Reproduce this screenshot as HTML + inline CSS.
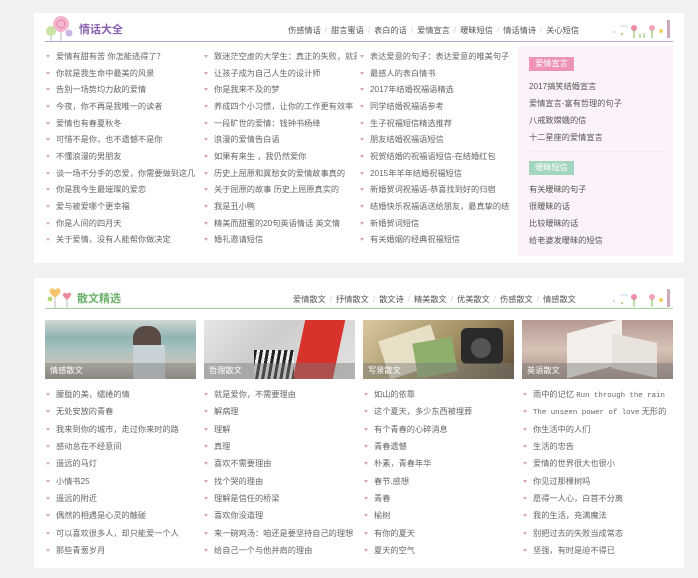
<!DOCTYPE html>
<html><head><meta charset="utf-8"><style>
*{margin:0;padding:0;box-sizing:border-box}
body{width:698px;height:578px;background:#f1f1f1;font-family:"Liberation Sans","Noto Sans CJK SC",sans-serif;font-size:9px;color:#555;position:relative;overflow:hidden}
.panel{position:absolute;left:34px;width:650px;background:#fff}
.a{position:absolute;white-space:nowrap}
.li{position:absolute;white-space:nowrap;font-size:8.2px;color:#666;line-height:12px;width:143px;overflow:visible}
.li b{display:block;overflow:hidden;font-weight:normal;width:143px}
.li:before{content:"";position:absolute;left:-10px;top:4px;border-left:2.5px solid transparent;border-right:2.5px solid transparent;border-top:3.5px solid #d9a5b5}
.nav{position:absolute;font-size:8.2px;color:#555;white-space:nowrap}
.nav span{color:#ccc;margin:0 4px}
.side{position:absolute;font-size:8.2px;color:#555;white-space:nowrap}
.img{position:absolute;top:320px;width:151px;height:59px;overflow:hidden}
.cap{position:absolute;left:0;bottom:0;width:100%;height:16px;background:rgba(120,120,120,.45);color:#fff;font-size:8.2px;line-height:16px;padding-left:5px}
</style></head><body>
<div class="panel" style="top:13px;height:250px"></div>
<div class="panel" style="top:278px;height:290px"></div>

<svg class="a" style="left:44px;top:14px" width="30" height="28"><circle cx="17" cy="10" r="8" fill="#f3b5cf"/><circle cx="17" cy="10" r="4" fill="none" stroke="#e07fa8" stroke-width="1"/><circle cx="7" cy="17" r="5" fill="#c9e3a5"/><circle cx="25" cy="19" r="3.5" fill="#cbb4e3"/><line x1="17" y1="18" x2="17" y2="28" stroke="#bbb"/><line x1="7" y1="22" x2="7" y2="28" stroke="#bbb"/></svg>
<div class="a" style="left:79px;top:21px;font-size:11px;font-weight:bold;color:#8a5fb0">情话大全</div>
<div class="nav" style="left:288px;top:24px">伤感情话<span>/</span>甜言蜜语<span>/</span>表白的话<span>/</span>爱情宣言<span>/</span>暧昧短信<span>/</span>情话情诗<span>/</span>关心短信</div>
<svg class="a" style="left:592px;top:16px" width="80" height="24"><circle cx="22" cy="16" r="1" fill="#bcd"/><circle cx="30" cy="18" r="1" fill="#9c6"/><line x1="28" y1="10" x2="36" y2="10" stroke="#bde" /><circle cx="42" cy="12" r="3" fill="#f08aa8"/><circle cx="60" cy="12" r="3" fill="#f5a3b8"/><circle cx="69" cy="15" r="2" fill="#f5d060"/><line x1="42" y1="14" x2="42" y2="22" stroke="#7b5"/><line x1="60" y1="14" x2="60" y2="22" stroke="#7b5"/><line x1="48" y1="18" x2="48" y2="22" stroke="#7b5"/><line x1="52" y1="17" x2="52" y2="22" stroke="#7b5"/><rect x="75" y="4" width="3" height="18" fill="#cab"/></svg>
<div class="a" style="left:45px;top:41px;width:628px;height:1px;background:#b9a6cf"></div>

<div class="li" style="left:56px;top:51px"><b>爱情有甜有苦 你怎能逃得了？</b></div>
<div class="li" style="left:56px;top:68px"><b>你就是我生命中最美的风景</b></div>
<div class="li" style="left:56px;top:84px"><b>告别一场势均力敌的爱情</b></div>
<div class="li" style="left:56px;top:101px"><b>今夜，你不再是我唯一的读者</b></div>
<div class="li" style="left:56px;top:118px"><b>爱情也有春夏秋冬</b></div>
<div class="li" style="left:56px;top:134px"><b>可惜不是你，也不遗憾不是你</b></div>
<div class="li" style="left:56px;top:151px"><b>不懂浪漫的男朋友</b></div>
<div class="li" style="left:56px;top:168px"><b>谈一场不分手的恋爱，你需要做到这几</b></div>
<div class="li" style="left:56px;top:184px"><b>你是我今生最璀璨的爱恋</b></div>
<div class="li" style="left:56px;top:201px"><b>爱与被爱哪个更幸福</b></div>
<div class="li" style="left:56px;top:218px"><b>你是人间的四月天</b></div>
<div class="li" style="left:56px;top:234px"><b>关于爱情，没有人能帮你做决定</b></div>

<div class="li" style="left:214px;top:51px"><b>致迷茫空虚的大学生：真正的失败，就是</b></div>
<div class="li" style="left:214px;top:68px"><b>让孩子成为自己人生的设计师</b></div>
<div class="li" style="left:214px;top:84px"><b>你是我来不及的梦</b></div>
<div class="li" style="left:214px;top:101px"><b>养成四个小习惯，让你的工作更有效率</b></div>
<div class="li" style="left:214px;top:118px"><b>一段旷世的爱情：钱钟书杨绛</b></div>
<div class="li" style="left:214px;top:134px"><b>浪漫的爱情告白语</b></div>
<div class="li" style="left:214px;top:151px"><b>如果有来生 ，我仍然爱你</b></div>
<div class="li" style="left:214px;top:168px"><b>历史上屈原和冀愁女的爱情故事真的</b></div>
<div class="li" style="left:214px;top:184px"><b>关于屈原的故事 历史上屈原真实的</b></div>
<div class="li" style="left:214px;top:201px"><b>我是丑小鸭</b></div>
<div class="li" style="left:214px;top:218px"><b>精美而甜蜜的20句英语情话 英文情</b></div>
<div class="li" style="left:214px;top:234px"><b>婚礼邀请短信</b></div>

<div class="li" style="left:370px;top:51px"><b>表达爱意的句子：表达爱意的唯美句子</b></div>
<div class="li" style="left:370px;top:68px"><b>最感人的表白情书</b></div>
<div class="li" style="left:370px;top:84px"><b>2017年结婚祝福语精选</b></div>
<div class="li" style="left:370px;top:101px"><b>同学结婚祝福语参考</b></div>
<div class="li" style="left:370px;top:118px"><b>生子祝福短信精选推荐</b></div>
<div class="li" style="left:370px;top:134px"><b>朋友结婚祝福语短信</b></div>
<div class="li" style="left:370px;top:151px"><b>祝贺结婚的祝福语短信-在结婚红包</b></div>
<div class="li" style="left:370px;top:168px"><b>2015年羊年结婚祝福短信</b></div>
<div class="li" style="left:370px;top:184px"><b>新婚贺词祝福语-恭喜找到好的归宿</b></div>
<div class="li" style="left:370px;top:201px"><b>结婚快乐祝福语送给朋友，最真挚的结</b></div>
<div class="li" style="left:370px;top:218px"><b>新婚贺词短信</b></div>
<div class="li" style="left:370px;top:234px"><b>有关婚姻的经典祝福短信</b></div>

<div class="a" style="left:518px;top:46px;width:155px;height:210px;background:#fbf3f9"></div>
<div class="a" style="left:529px;top:57px;width:45px;height:14px;background:#ec93b6;color:#fff;font-size:8.2px;line-height:14px;text-align:center">爱情宣言</div>
<div class="side" style="left:529px;top:80px">2017搞笑结婚宣言</div>
<div class="side" style="left:529px;top:97px">爱情宣言-富有哲理的句子</div>
<div class="side" style="left:529px;top:114px">八戒致嫦娥的信</div>
<div class="side" style="left:529px;top:131px">十二星座的爱情宣言</div>
<div class="a" style="left:529px;top:151px;width:135px;height:1px;background:#eee"></div>
<div class="a" style="left:529px;top:161px;width:45px;height:14px;background:#a3d6bf;color:#fff;font-size:8.2px;line-height:14px;text-align:center">暧昧短信</div>
<div class="side" style="left:529px;top:183px">有关暧昧的句子</div>
<div class="side" style="left:529px;top:200px">很暧昧的话</div>
<div class="side" style="left:529px;top:217px">比较暧昧的话</div>
<div class="side" style="left:529px;top:234px">给老婆发暧昧的短信</div>

<svg class="a" style="left:45px;top:284px" width="30" height="24"><path d="M10 6c-3-4-8 0-4 4l4 4 4-4c4-4-1-8-4-4z" fill="#f5c36a"/><path d="M22 10c-2-3-6 0-3 3l3 3 3-3c3-3-1-6-3-3z" fill="#ea8a9c"/><circle cx="5" cy="15" r="2.5" fill="#b7d77a"/><line x1="10" y1="14" x2="10" y2="24" stroke="#bbb"/><line x1="22" y1="16" x2="22" y2="24" stroke="#bbb"/></svg>
<div class="a" style="left:77px;top:290px;font-size:11px;font-weight:bold;color:#6ab06a">散文精选</div>
<div class="nav" style="left:293px;top:293px">爱情散文<span>/</span>抒情散文<span>/</span>散文诗<span>/</span>精美散文<span>/</span>优美散文<span>/</span>伤感散文<span>/</span>情感散文</div>
<svg class="a" style="left:592px;top:285px" width="80" height="24"><circle cx="22" cy="16" r="1" fill="#bcd"/><circle cx="30" cy="18" r="1" fill="#9c6"/><line x1="28" y1="10" x2="36" y2="10" stroke="#bde"/><circle cx="42" cy="12" r="3" fill="#f08aa8"/><circle cx="60" cy="12" r="3" fill="#f5a3b8"/><circle cx="69" cy="15" r="2" fill="#f5d060"/><line x1="42" y1="14" x2="42" y2="22" stroke="#7b5"/><line x1="60" y1="14" x2="60" y2="22" stroke="#7b5"/><rect x="75" y="4" width="3" height="18" fill="#cab"/></svg>
<div class="a" style="left:45px;top:308px;width:628px;height:1px;background:#a8d4a2"></div>

<div class="img" style="left:45px;background:linear-gradient(180deg,#cfd8d5 0%,#8fb3b2 30%,#a9c2c0 50%,#c7c3b8 75%,#9e9488 100%)"><div class="a" style="left:88px;top:6px;width:28px;height:53px;background:#5a4a44;border-radius:12px 12px 2px 2px"></div><div class="a" style="left:88px;top:25px;width:32px;height:34px;background:#c9d2d6"></div><div class="cap">情感散文</div></div>
<div class="img" style="left:204px;background:linear-gradient(135deg,#e8e6e4 0%,#cfcdcb 40%,#e5e3e1 100%)"><div class="a" style="left:95px;top:0;width:40px;height:59px;background:#d8322c;transform:skewX(-12deg)"></div><div class="a" style="left:50px;top:30px;width:40px;height:29px;background:repeating-linear-gradient(100deg,#222 0 3px,#eee 3px 6px)"></div><div class="cap">哲理散文</div></div>
<div class="img" style="left:363px;background:linear-gradient(135deg,#d9c79e 0%,#a69468 50%,#5e4c36 100%)"><div class="a" style="left:20px;top:12px;width:55px;height:40px;background:#e8e0c6;transform:rotate(-18deg)"></div><div class="a" style="left:52px;top:20px;width:40px;height:35px;background:#8fae6c;transform:rotate(-10deg)"></div><div class="a" style="left:98px;top:8px;width:42px;height:36px;background:#2a2a2a;border-radius:6px"></div><div class="a" style="left:108px;top:18px;width:20px;height:20px;background:#555;border-radius:50%"></div><div class="cap">写景散文</div></div>
<div class="img" style="left:522px;background:linear-gradient(180deg,#b59a92 0%,#d7c3b7 50%,#a58c82 100%)"><div class="a" style="left:45px;top:6px;width:55px;height:45px;background:#f2efea;transform:skewY(-15deg)"></div><div class="a" style="left:90px;top:18px;width:45px;height:35px;background:#e9e3dd;transform:skewY(12deg)"></div><div class="cap">英语散文</div></div>

<div class="li" style="left:56px;top:389px">朦胧的美，缱绻的情</div>
<div class="li" style="left:56px;top:406px">无处安放的青春</div>
<div class="li" style="left:56px;top:424px">我来到你的城市，走过你来时的路</div>
<div class="li" style="left:56px;top:441px">感动总在不经意间</div>
<div class="li" style="left:56px;top:458px">遥远的马灯</div>
<div class="li" style="left:56px;top:476px">小情书25</div>
<div class="li" style="left:56px;top:493px">遥远的附近</div>
<div class="li" style="left:56px;top:510px">偶然的相遇是心灵的触碰</div>
<div class="li" style="left:56px;top:528px">可以喜欢很多人，却只能爱一个人</div>
<div class="li" style="left:56px;top:545px">那些青葱岁月</div>

<div class="li" style="left:214px;top:389px">就是爱你，不需要理由</div>
<div class="li" style="left:214px;top:406px">解病理</div>
<div class="li" style="left:214px;top:424px">理解</div>
<div class="li" style="left:214px;top:441px">真理</div>
<div class="li" style="left:214px;top:458px">喜欢不需要理由</div>
<div class="li" style="left:214px;top:476px">找个哭的理由</div>
<div class="li" style="left:214px;top:493px">理解是信任的桥梁</div>
<div class="li" style="left:214px;top:510px">喜欢你没道理</div>
<div class="li" style="left:214px;top:528px">来一碗鸡汤：咱还是要坚持自己的理想</div>
<div class="li" style="left:214px;top:545px">给自己一个与他并肩的理由</div>

<div class="li" style="left:374px;top:389px">如山的依靠</div>
<div class="li" style="left:374px;top:406px">这个夏天，多少东西被埋葬</div>
<div class="li" style="left:374px;top:424px">有个青春的心碎消息</div>
<div class="li" style="left:374px;top:441px">青春遗憾</div>
<div class="li" style="left:374px;top:458px">朴素，青春年华</div>
<div class="li" style="left:374px;top:476px">春节.感想</div>
<div class="li" style="left:374px;top:493px">青春</div>
<div class="li" style="left:374px;top:510px">榆树</div>
<div class="li" style="left:374px;top:528px">有你的夏天</div>
<div class="li" style="left:374px;top:545px">夏天的空气</div>

<div class="li" style="left:533px;top:389px">雨中的记忆 <span style="font-family:'Liberation Mono',monospace;font-size:7.4px">Run through the rain</span></div>
<div class="li" style="left:533px;top:406px"><span style="font-family:'Liberation Mono',monospace;font-size:7.4px">The unseen power of love</span> 无形的</div>
<div class="li" style="left:533px;top:424px">你生活中的人们</div>
<div class="li" style="left:533px;top:441px">生活的忠告</div>
<div class="li" style="left:533px;top:458px">爱情的世界很大也很小</div>
<div class="li" style="left:533px;top:476px">你见过那棵树吗</div>
<div class="li" style="left:533px;top:493px">愿得一人心，白首不分离</div>
<div class="li" style="left:533px;top:510px">我的生活，充满魔法</div>
<div class="li" style="left:533px;top:528px">别把过去的失败当成常态</div>
<div class="li" style="left:533px;top:545px">坚强，有时是迫不得已</div>
</body></html>
